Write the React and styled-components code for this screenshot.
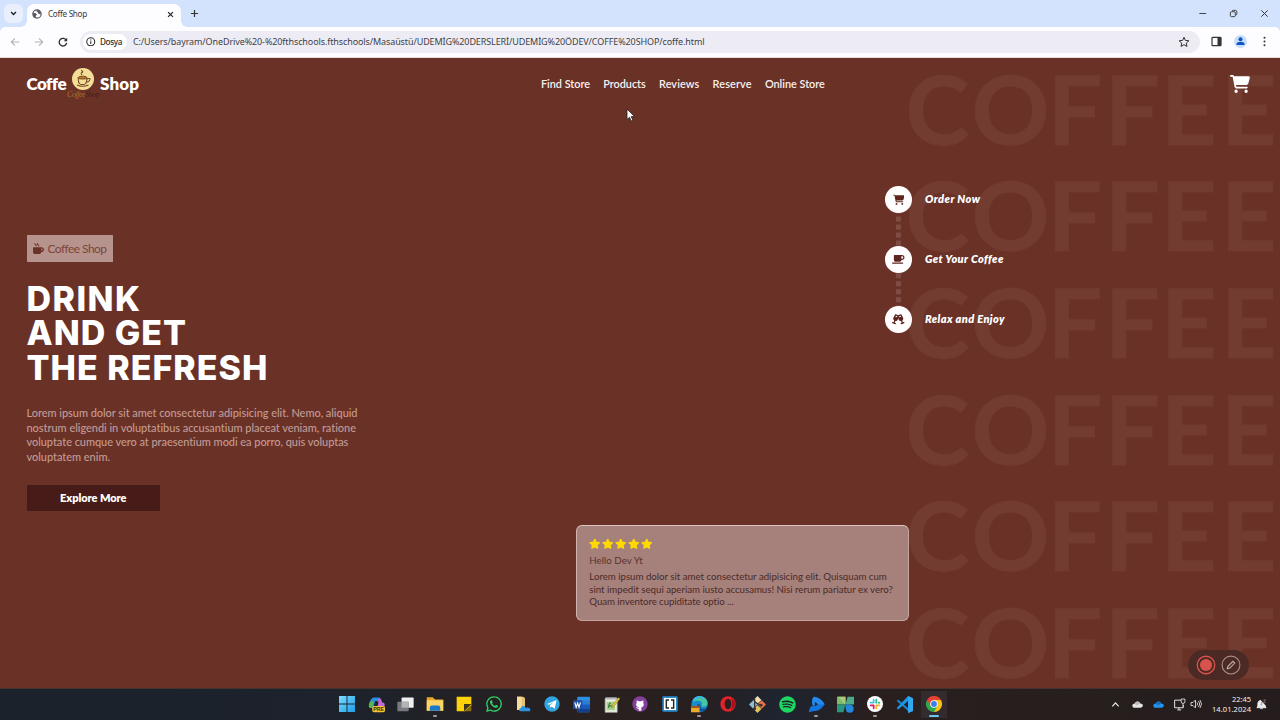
import React, { useLayoutEffect, useRef, useState } from 'react';
import styled, { createGlobalStyle, css } from 'styled-components';
import {
  FaCartShopping, FaMugSaucer, FaMugHot, FaChampagneGlasses, FaStar, FaWhatsapp, FaSpotify,
} from 'react-icons/fa6';

const Global = createGlobalStyle`
  * { box-sizing: border-box; }
  html, body { margin: 0; padding: 0; overflow: hidden; }
  body { font-family: Lato, "Liberation Sans", sans-serif; }
  svg { display: block; flex: none; }
`;

const ui = '"Noto Sans", "Open Sans", sans-serif';

/* ---------- text that is tracked to an exact line width ---------- */
const Line = styled.span`
  display: block;
  width: max-content;
  white-space: pre;
`;

function Fit({ w, children }) {
  const ref = useRef(null);
  const [tracking, setTracking] = useState(0);
  useLayoutEffect(() => {
    const natural = ref.current.getBoundingClientRect().width;
    setTracking((w - natural) / children.length);
  }, [w, children]);
  return <Line ref={ref} style={{ letterSpacing: `${tracking}px` }}>{children}</Line>;
}

/* ---------- browser chrome ---------- */
const Screen = styled.div`
  width: 1280px;
  height: 720px;
  display: flex;
  flex-direction: column;
  overflow: hidden;
  background: #6a3127;
`;
const TabStrip = styled.div`
  flex: none;
  height: 27px;
  display: flex;
  align-items: flex-start;
  padding: 4px 0 0 4px;
  background: #d3e3fd;
`;
const TabSearch = styled.div`
  width: 19px;
  height: 19px;
  border-radius: 6px;
  background: #e9effb;
  display: grid;
  place-items: center;
`;
const Tab = styled.div`
  position: relative;
  width: 154px;
  height: 23px;
  margin-left: 4px;
  padding: 0 6px 3px 5px;
  border-radius: 7px 7px 0 0;
  background: #fdfcff;
  display: flex;
  align-items: center;
  font: 8.2px/12px ${ui};
  color: #3a3a3e;
  &::before, &::after {
    content: '';
    position: absolute;
    bottom: 0;
    width: 6px;
    height: 6px;
  }
  &::before { left: -6px; background: radial-gradient(circle at 0 0, transparent 5.5px, #fdfcff 6px); }
  &::after { right: -6px; background: radial-gradient(circle at 100% 0, transparent 5.5px, #fdfcff 6px); }
`;
const TabTitle = styled.div`
  flex: 1;
  margin-left: 6px;
`;
const NewTab = styled.div`
  margin: 5px 0 0 9px;
`;
const WindowControls = styled.div`
  margin-left: auto;
  display: flex;
  align-items: center;
  height: 19px;
  gap: 22px;
  padding-right: 11px;
`;
const Toolbar = styled.div`
  flex: none;
  height: 31px;
  display: flex;
  align-items: center;
  padding: 0 10px 1px 10px;
  background: linear-gradient(#fdfcff, #fdfcff) 0 6px no-repeat,
    radial-gradient(circle at 6px 6px, #fdfcff 6px, transparent 6.5px) 0 0 / 6px 6px no-repeat,
    radial-gradient(circle at 0 6px, #fdfcff 6px, transparent 6.5px) 100% 0 / 6px 6px no-repeat,
    linear-gradient(#fdfcff, #fdfcff) 6px 0 / 1268px 6px no-repeat, #d3e3fd;
  border-bottom: 1px solid #e3dcdf;
`;
const NavIcons = styled.div`
  display: flex;
  gap: 14px;
  width: 70px;
`;
const Address = styled.div`
  width: 1120px;
  height: 22px;
  border-radius: 11px;
  background: #edecf5;
  display: flex;
  align-items: center;
  padding: 0 10px 0 3px;
  font: 9px/12px ${ui};
  color: #3f3f46;
`;
const FileChip = styled.div`
  width: 44px;
  height: 16px;
  border-radius: 8px;
  background: #fff;
  display: flex;
  align-items: center;
  gap: 4px;
  padding-left: 3.5px;
  margin-right: 6px;
  font-size: 8.2px;
  font-weight: 500;
  color: #2a2a2e;
`;
const AddressText = styled.div`flex: 1;`;
const ToolIcons = styled.div`
  display: flex;
  align-items: center;
  gap: 12px;
  margin-left: 11.5px;
`;

/* ---------- page ---------- */
const Page = styled.main`
  position: relative;
  flex: none;
  height: 630px;
  overflow: hidden;
  background: #6a3127;
  color: #fff;
`;
const Watermark = styled.div`
  position: absolute;
  top: -3.5px;
  left: 905.5px;
  font-size: 96.5px;
  font-weight: 700;
  line-height: 106.67px;
  color: #733c31;
  -webkit-text-stroke: 1px #733c31;
`;
const WatermarkRow = styled.div`
  display: flex;
`;
const Content = styled.div`
  position: relative;
  height: 100%;
`;
const Header = styled.header`
  height: 53px;
  display: flex;
  align-items: center;
  padding: 0 30px 1px 26.5px;
`;
const Brand = styled.div`
  display: flex;
  align-items: center;
  width: 514.5px;
  font-size: 17px;
  font-weight: 800;
  line-height: 22px;
`;
const BrandMark = styled.div`
  width: 34px;
  height: 34px;
  display: flex;
  flex-direction: column;
  align-items: center;
  padding-top: 1px;
`;
const BrandScript = styled.div`
  display: flex;
  margin-top: 0;
  font: italic 400 8px/10px "Liberation Serif", serif;
  color: #a9732b;
  em { color: #47201d; }
`;
const Nav = styled.nav`
  flex: 1;
  display: flex;
  gap: 13.3px;
  font-size: 10.9px;
  font-weight: 600;
  line-height: 14px;
  color: #f7f0ee;
`;
const Body = styled.div`
  display: flex;
  padding-left: 26.5px;
`;
const Hero = styled.section`
  width: 549.5px;
  padding-top: 124px;
`;
const Badge = styled.div`
  width: 86.5px;
  height: 27px;
  display: flex;
  align-items: center;
  gap: 3.5px;
  padding-left: 6.5px;
  background: #b6938d;
  color: #7a463d;
  font-size: 12px;
  line-height: 16px;
  svg { color: #6a3127; }
`;
const Title = styled.h1`
  margin: 19.5px 0 0;
  font-family: Inter, Lato, sans-serif;
  font-size: 34px;
  font-weight: 800;
  line-height: 34.67px;
`;
const Lead = styled.div`
  margin-top: 20.5px;
  font-size: 11px;
  font-weight: 500;
  line-height: 14.67px;
  color: #c19b94;
`;
const Button = styled.div`
  width: 133.5px;
  height: 26.5px;
  margin-top: 20px;
  display: grid;
  place-items: center;
  background: #471b17;
  font-size: 11px;
  font-weight: 800;
  line-height: 14px;
`;
const Side = styled.section`
  padding-top: 75px;
`;
const Steps = styled.div`
  margin-left: 309px;
`;
const Step = styled.div`
  display: flex;
  align-items: center;
  gap: 13.3px;
  height: 26.67px;
  font-size: 11px;
  font-weight: 800;
  font-style: italic;
  line-height: 14px;
`;
const StepDot = styled.div`
  width: 26.67px;
  height: 26.67px;
  border-radius: 50%;
  background: #fffdfd;
  color: #5c241c;
  display: grid;
  place-items: center;
`;
const Connector = styled.div`
  width: 5.4px;
  height: 33.33px;
  margin-left: 10.6px;
  background: repeating-linear-gradient(#7d4c43 0 5.33px, transparent 5.33px 8px);
  background-position: 0 ${(p) => p.$shift}px;
  background-size: 100% 8px;
`;
const Review = styled.article`
  width: 333.4px;
  height: 96.5px;
  margin-top: 192px;
  padding: 12.5px 0 0 12.3px;
  border: 1px solid #c4a5a0;
  border-top: 1.5px solid #dcc6c3;
  border-left-color: #d0b3af;
  border-radius: 6px;
  background: #a6817b;
  color: #4b2a27;
`;
const Stars = styled.div`
  display: flex;
  gap: 1.4px;
  color: #ffd900;
`;
const Reviewer = styled.div`
  margin-top: 3.5px;
  font-size: 9.8px;
  line-height: 14px;
  color: #573430;
`;
const Quote = styled.div`
  margin-top: 2.6px;
  font-size: 9.7px;
  line-height: 12.8px;
`;
const Recorder = styled.div`
  position: absolute;
  left: 1188px;
  top: 592px;
  width: 61px;
  height: 30px;
  border-radius: 15px;
  background: #4b2a26;
  display: flex;
  align-items: center;
  justify-content: center;
  gap: 5px;
`;
const Cursor = styled.div`
  position: absolute;
  left: 625.5px;
  top: 50px;
`;

/* ---------- taskbar ---------- */
const Taskbar = styled.footer`
  flex: none;
  height: 32px;
  display: flex;
  align-items: stretch;
  padding: 0 0 1px 332.5px;
  border-top: 1px solid #46322f;
  background: linear-gradient(90deg, #1b222c 0, #1d222b 28%, #29201f 46%, #281f1f 54%, #1e2430 61%, #291f1f 68%, #251d1d 100%);
`;
const AppSlot = styled.div`
  position: relative;
  width: 29.33px;
  display: grid;
  place-items: center;
  ${(p) => p.$active && css`
    background: linear-gradient(#332c2e, #332c2e) center / 26px 27px no-repeat;
  `}
  &::after {
    content: '';
    display: ${(p) => (p.$running || p.$active ? 'block' : 'none')};
    position: absolute;
    bottom: 2.5px;
    left: 50%;
    width: ${(p) => (p.$active ? 10 : 4)}px;
    height: 2px;
    margin-left: ${(p) => (p.$active ? -5 : -2)}px;
    border-radius: 1px;
    background: ${(p) => (p.$active ? '#67c6f2' : '#a09a9a')};
  }
`;
const Tray = styled.div`
  margin-left: auto;
  display: flex;
  align-items: center;
  padding-right: 13px;
`;
const TrayIcon = styled.div`
  margin-right: ${(p) => p.$gap}px;
`;
const Clock = styled.div`
  width: 39px;
  display: flex;
  flex-direction: column;
  align-items: flex-end;
  font: 7.5px/10px ${ui};
  color: #f4f0f0;
  margin-right: 5px;
`;

const S = ({ s = 17, w, h, v = 24, children, ...r }) => (
  <svg width={w || s} height={h || s} viewBox={`0 0 ${v} ${v}`} fill="none" {...r}>{children}</svg>
);

const apps = [
  { i: <S s={16}><defs><linearGradient id="win" x2="1" y2="1"><stop stopColor="#7bdcff" /><stop offset="1" stopColor="#1f9ee8" /></linearGradient></defs><path fill="url(#win)" d="M0 0h11.3v11.3H0zM12.7 0H24v11.3H12.7zM0 12.7h11.3V24H0zM12.7 12.7H24V24H12.7z" /></S> },
  { i: (
    <S s={17}>
      <path d="M8 2h8l3 6-4 1-4-2-3 9H3C0 13 3 3 8 2Z" fill="#2a8fe0" />
      <path d="M3 8l5-1-2 10H3c-3-1-2-6 0-9Z" fill="#54b84d" />
      <path d="M16 3c3 0 3 4 4 6 4 0 4 3 3 7l-5 3H9c4-2 4-15 7-16Z" fill="#c46bd6" />
      <path d="M10 7l5 1-2 8H8Z" fill="#1e2430" />
      <rect x="6" y="14" width="18" height="9" rx="2.5" fill="#f5c536" />
      <text x="15" y="21.3" textAnchor="middle" fontSize="7.5" fontWeight="700" fontFamily="Liberation Sans" fill="#3b2b08">PRE</text>
    </S>) },
  { i: <S s={17}><rect x="6.5" y="2" width="17" height="14.5" rx="1" fill="#efeff0" /><rect x=".5" y="8" width="16" height="13.5" rx="1" fill="#777b80" /><path d="M6.5 8h10v8.5h-10z" fill="#b3b4b6" /></S> },
  { run: 1, i: <S s={18}><path d="M1 3h8l3 3h11v15H1z" fill="#e7a825" /><path d="M1 7h22v14H1z" fill="#fbd367" /><path d="M5 21v-4q0-3 3-3h8q3 0 3 3v4z" fill="#1c78c9" /></S> },
  { i: <S s={16}><path d="M1 1h22v13l-9 9H1z" fill="#fdd208" /><path d="M12 12h11L12 23z" fill="#3b3420" /><path d="M23 13v10H13z" fill="#8b6e0a" /></S> },
  { i: <FaWhatsapp size={18} color="#2fd366" /> },
  { i: <S s={16}><path d="M3 1h9l3 2v18H3z" fill="#e8c270" /><path d="M3 1h7v20H3z" fill="#f5dc9c" /><path d="M9 23c-4 0-3-5 0-5 1-4 6-4 7 0 3-2 8 0 7 4l-1 1z" fill="#2b93e2" /></S> },
  { i: <S s={16}><circle cx="12" cy="12" r="11.5" fill="#31a5df" /><path d="M4.5 12 19 6l-3 13-4.500-3.300-2.200 2-.5-3.800 6-5-7.500 4.300z" fill="#fff" /></S> },
  { i: <S s={17}><rect x="6" y="1" width="18" height="22" rx="1.500" fill="#2f8de0" /><path d="M6 6.500h18V12H6z" fill="#2b7cd3" /><path d="M6 12h18v5.500H6z" fill="#185abd" /><path d="M6 17.500h18V22q0 1-1 1H7q-1 0-1-1z" fill="#143f8a" /><rect x="0" y="6" width="13" height="12.500" rx="1" fill="#1b4fa3" /><path d="m2.500 9 2 7 2-6 2 6 2-7" stroke="#fff" strokeWidth="1.600" /></S> },
  { i: <S s={17}><path d="M3 3h17v20H3z" fill="#ecefe4" stroke="#aaa" /><path d="M4 2h15v3H4z" fill="#b8babb" /><path d="M5 8h12v12H5z" fill="#a9cf8c" /><path d="M8 17q0-7 3-7M7 14h8" stroke="#3f7d35" strokeWidth="1.800" /><path d="m12 17 1-4L22 2l2 2-9 11z" fill="#e5c740" stroke="#6a6329" strokeWidth=".6" /></S> },
  { i: <S s={16}><circle cx="12" cy="12" r="11.500" fill="#82409d" /><path d="M7 6.500 10 8h4l3-1.500v4c2 4-1 6-3 6.500v5h-4v-3c-3 1-3-1-4-2 2-.5 2 1 4 .7V17c-3-1-5-3-3-6.500z" fill="#fff" /></S> },
  { i: <S s={16}><rect x=".5" y=".5" width="23" height="23" rx="2" fill="#268fd2" /><rect x="3" y="3" width="18" height="18" fill="#fff" /><path d="M10.500 6h-4v12h4M13.500 6h4v12h-4" stroke="#25262a" strokeWidth="2.200" /></S> },
  { run: 1, i: (
    <S s={17}>
      <circle cx="12" cy="11.500" r="11.500" fill="#178bd2" />
      <path d="M3 5C9-3 23 0 23.500 10c0 5-6 6-9 4 2-3 1-7-3-7-4-1-7 0-8.500 2z" fill="#47c6a0" />
      <path d="M3 5c4-6 14-6 17 0-6-4-12-2-17 3z" fill="#38b7ea" />
      <path d="M14 14c-2 4 4 5 8 3-3 6-8 6-12 3-3-3-2-8 1-9z" fill="#134d93" />
      <path d="M0 14h12v9H0z" fill="#edab2d" /><path d="M0 14h12v3H0z" fill="#9b5a20" />
    </S>) },
  { i: <S s={16}><ellipse cx="12" cy="12" rx="11.500" ry="11.500" fill="#e3222b" /><ellipse cx="12" cy="12" rx="5" ry="8" fill="#2b2020" /><path d="M16 3c9 4 9 14 0 18 3-4 3-14 0-18Z" fill="#a80f1b" /></S> },
  { i: (
    <S s={17}>
      <path d="m12 0 5.500 5.500L12 11 6.500 5.500z" fill="#f2dfb5" /><path d="m18 6 6 6-6 6-6-6z" fill="#e8734a" />
      <path d="m6 6 6 6-6 6-6-6z" fill="#8bbfd5" /><path d="m12 13 5.500 5.500L12 24l-5.500-5.500z" fill="#dfc45b" />
      <path d="M8 4v14M8 8l8 5" stroke="#3b312c" strokeWidth="1.800" /><circle cx="8" cy="18" r="2" fill="#3b312c" /><circle cx="17" cy="13" r="2" fill="#3b312c" />
    </S>) },
  { i: <FaSpotify size={17} color="#1ed760" /> },
  { run: 1, i: <S s={17}><path d="M8 1q10 1 15.500 10.500Q17 22 9 21l-8 2 2-7q1-2 4-2Q4 7 8 1Z" fill="#1274dc" /><path d="M8 1q-4 6-1 12l16.500-1.500Q18 2 8 1Z" fill="#2689ed" /><path d="M9.500 8.500v6l5-3z" fill="#202834" /></S> },
  { i: <S s={17}><path d="M0 1h12v11H0z" fill="#80b96a" /><path d="M12 12 15 1h9v11z" fill="#51a98b" /><path d="M0 23V12h12L9 23z" fill="#2b967e" /><path d="M1 1 12 12V1z" fill="#a4cc7a" /><circle cx="18" cy="18" r="5.500" fill="#2487dd" /><path d="M12 12h6l-6 6z" fill="#2487dd" /></S> },
  { run: 1, i: (
    <S s={16}>
      <circle cx="12" cy="12" r="12" fill="#fff" />
      <g strokeWidth="2.600" strokeLinecap="round"><path d="M10 5.500v4.500M5.500 10H10" stroke="#36c5f0" /><path d="M14 5.500V10M18.500 10h-1" stroke="#2eb67d" /><path d="M14 14v4.500M14 14h4.500" stroke="#ecb22e" /><path d="M10 14v4.500M5.500 14H10" stroke="#e01e5a" /></g>
    </S>) },
  { i: <S s={17}><path d="m17 0 7 3v18l-7 3v-7L3 5 1 7l16 14z" fill="#1683cc" /><path d="M17 0v7L3 19l-2-2z" fill="#1b96e4" /><path d="m17 0 7 3v18l-7 3z" fill="#32a9ef" /></S> },
  { act: 1, i: (
    <S s={16}>
      <path d="M12 12V6h10.400A12 12 0 0 1 12 24z" fill="#fbc116" />
      <path d="M1.600 6A12 12 0 0 0 12 24l5-9-5-3z" fill="#2da94f" /><path d="M1.600 6A12 12 0 0 1 22.400 6H12v6l-5 3z" fill="#e74235" />
      <circle cx="12" cy="12" r="5.700" fill="#fff" /><circle cx="12" cy="12" r="4.400" fill="#397fee" />
    </S>) },
];

const steps = [
  { icon: <FaCartShopping size={11.5} />, text: 'Order Now', w: 55.5, shift: 3.6 },
  { icon: <FaMugSaucer size={12.5} />, text: 'Get Your Coffee', w: 78.5, shift: 0.2 },
  { icon: <FaChampagneGlasses size={12.5} />, text: 'Relax and Enjoy', w: 80 },
];

const letters = [['C', 66], ['O', 76], ['F', 57.5], ['F', 56], ['E', 60], ['E', 56]];
const LetterBox = styled.span`
  display: block;
  width: ${(p) => p.$w}px;
`;

const Cloud = ({ c, d }) => (
  <S w={11} h={11}><path d="M6 19c-7 0-7-9 0-9 2-6 10-6 12 0 8 0 7 9 0 9z" fill={c} /><path d="M6 10c2-6 10-6 12 0l-8 4z" fill={d} /></S>
);

export default function App() {
  return (
    <Screen>
      <Global />
      <TabStrip>
        <TabSearch><S s={7} v={10}><path d="m1.500 3 3.500 3.500L8.500 3" stroke="#222" strokeWidth="2" /></S></TabSearch>
        <Tab>
          <S s={10}><circle cx="12" cy="12" r="10" stroke="#55585e" strokeWidth="2.800" /><path d="M3 9l6 1 3 4-3 2v6C4 21 1 15 3 9ZM12 2l-1 4 3 2 1 3 6 2c1-5-2-10-9-11Z" fill="#55585e" /></S>
          <TabTitle><Fit w={39}>Coffe Shop</Fit></TabTitle>
          <S s={9} v={10}><path d="m2.300 2.300 5.400 5.400M7.700 2.300 2.300 7.700" stroke="#222" strokeWidth="1.300" /></S>
        </Tab>
        <NewTab><S s={9} v={10}><path d="M5 1v8M1 5h8" stroke="#333" strokeWidth="1.300" /></S></NewTab>
        <WindowControls>
          <S s={9} v={10}><path d="M1.500 5h7.500" stroke="#333" /></S>
          <S s={9} v={10}><rect x="1.500" y="3" width="5.500" height="5.500" rx="1.200" stroke="#333" /><path d="M3.500 2.500Q3.500 1.500 5 1.500h2q1.700 0 1.700 1.700v2q0 1.500-1.200 1.500" stroke="#333" /></S>
          <S s={9} v={10}><path d="m1.500 1.500 7 7M8.500 1.500l-7 7" stroke="#333" strokeWidth="1.100" /></S>
        </WindowControls>
      </TabStrip>
      <Toolbar>
        <NavIcons>
          <S s={10} v={10}><path d="M9.300 5H1.300M5 1.300 1.300 5 5 8.700" stroke="#b4b4b8" strokeWidth="1.200" /></S>
          <S s={10} v={10}><path d="M.700 5h8M5 1.300 8.700 5 5 8.700" stroke="#b4b4b8" strokeWidth="1.200" /></S>
          <S s={10} v={10}><path d="M8.300 3.300A3.800 3.800 0 1 0 8.700 6" stroke="#2b2b2f" strokeWidth="1.300" /><path d="M9.200.800v3.400H5.800z" fill="#2b2b2f" /></S>
        </NavIcons>
        <Address>
          <FileChip>
            <S s={9.5} v={10}><circle cx="5" cy="5" r="4.200" stroke="#2a2a2e" strokeWidth="1.100" /><path d="M5 4.400v3M5 2.500v1.100" stroke="#2a2a2e" strokeWidth="1.100" /></S>
            <Fit w={22}>Dosya</Fit>
          </FileChip>
          <AddressText>
            <Fit w={571.5}>C:/Users/bayram/OneDrive%20-%20fthschools.fthschools/Masaüstü/UDEMİG%20DERSLERİ/UDEMİG%20ÖDEV/COFFE%20SHOP/coffe.html</Fit>
          </AddressText>
          <S s={12}><path d="m12 2.500 2.800 6.300 6.900.700-5.200 4.600 1.500 6.800-6-3.500-6 3.500 1.500-6.800-5.200-4.600 6.900-.700z" stroke="#333" strokeWidth="2" /></S>
        </Address>
        <ToolIcons>
          <S s={11} v={11}><rect x="1" y="1.300" width="9" height="8.400" rx=".8" stroke="#333" strokeWidth="1.200" /><path d="M6.500 1.300H10v8.400H6.500z" fill="#333" /></S>
          <S s={13} v={13}><circle cx="6.500" cy="6.500" r="6.500" fill="#c9defb" /><circle cx="6.500" cy="4.300" r="2" fill="#0b57c4" /><path d="M2.500 10V9c0-3 8-3 8 0v1z" fill="#0b57c4" /></S>
          <S s={11} v={11}><g fill="#333"><circle cx="5.500" cy="1.700" r="1" /><circle cx="5.500" cy="5.500" r="1" /><circle cx="5.500" cy="9.300" r="1" /></g></S>
        </ToolIcons>
      </Toolbar>

      <Page>
        <Watermark>
          {[0, 1, 2, 3, 4, 5].map((r) => (
            <WatermarkRow key={r}>
              {letters.map(([ch, w], i) => <LetterBox key={i} $w={w}>{ch}</LetterBox>)}
            </WatermarkRow>
          ))}
        </Watermark>
        <Content>
          <Header>
            <Brand>
              <Fit w={39}>Coffe</Fit>
              <BrandMark>
                <S s={22}>
                  <circle cx="12" cy="12" r="12" fill="#f5de96" />
                  <ellipse cx="11.500" cy="10.500" rx="4.800" ry="1.600" fill="#b97b28" stroke="#6b3f23" />
                  <path d="M6.700 10.500c0 7 2 7.500 4.800 7.500s4.800-.500 4.800-7.500M16.300 12q4-1.500 3.200 1-1 2.500-4 2.500M5.500 18.500q6 3 12.500 0M11 7.500q-2-2 0-2.500t-1-2.500" stroke="#6b3f23" strokeWidth="1.100" />
                </S>
                <BrandScript><Fit w={18}>Coffee</Fit><em><Fit w={14}>Shop</Fit></em></BrandScript>
              </BrandMark>
              <Fit w={39}>Shop</Fit>
            </Brand>
            <Nav>
              <Fit w={49}>Find Store</Fit>
              <Fit w={42.4}>Products</Fit>
              <Fit w={40.3}>Reviews</Fit>
              <Fit w={39}>Reserve</Fit>
              <Fit w={60}>Online Store</Fit>
            </Nav>
            <FaCartShopping size={20} />
          </Header>
          <Body>
            <Hero>
              <Badge><FaMugHot size={11} /><Fit w={58.5}>Coffee Shop</Fit></Badge>
              <Title>
                <Fit w={115}>DRINK</Fit>
                <Fit w={160.5}>AND GET</Fit>
                <Fit w={242}>THE REFRESH</Fit>
              </Title>
              <Lead>
                <Fit w={331}>Lorem ipsum dolor sit amet consectetur adipisicing elit. Nemo, aliquid</Fit>
                <Fit w={330}>nostrum eligendi in voluptatibus accusantium placeat veniam, ratione</Fit>
                <Fit w={322}>voluptate cumque vero at praesentium modi ea porro, quis voluptas</Fit>
                <Fit w={83.500}>voluptatem enim.</Fit>
              </Lead>
              <Button><Fit w={66.500}>Explore More</Fit></Button>
            </Hero>
            <Side>
              <Steps>
                {steps.map((s) => (
                  <React.Fragment key={s.text}>
                    <Step><StepDot>{s.icon}</StepDot><Fit w={s.w}>{s.text}</Fit></Step>
                    {s.shift !== undefined && <Connector $shift={s.shift} />}
                  </React.Fragment>
                ))}
              </Steps>
              <Review>
                <Stars>{[0, 1, 2, 3, 4].map((i) => <FaStar key={i} size={11.5} />)}</Stars>
                <Reviewer><Fit w={53.500}>Hello Dev Yt</Fit></Reviewer>
                <Quote>
                  <Fit w={297.500}>Lorem ipsum dolor sit amet consectetur adipisicing elit. Quisquam cum</Fit>
                  <Fit w={303.500}>sint impedit sequi aperiam iusto accusamus! Nisi rerum pariatur ex vero?</Fit>
                  <Fit w={144.500}>Quam inventore cupiditate optio ...</Fit>
                </Quote>
              </Review>
            </Side>
          </Body>
        </Content>
        <Recorder>
          <S s={20}><circle cx="12" cy="12" r="10.500" stroke="#d9534d" strokeWidth="1.600" /><circle cx="12" cy="12" r="7.300" fill="#d9534d" /></S>
          <S s={20}><circle cx="12" cy="12" r="10.700" stroke="#a98f8c" strokeWidth="1.300" /><path d="m7.500 16.500.800-3 6-6 2.200 2.200-6 6z" stroke="#c3b0ae" strokeWidth="1.300" /></S>
        </Recorder>
        <Cursor>
          <S w={9} h={14} viewBox="0 0 9 14"><path d="M1 1v10.500l2.500-2.200 1.700 3.700 1.700-.800-1.700-3.600H8.500z" fill="#fff" stroke="#222" strokeWidth=".8" /></S>
        </Cursor>
      </Page>

      <Taskbar>
        {apps.map((a, i) => <AppSlot key={i} $running={a.run} $active={a.act}>{a.i}</AppSlot>)}
        <Tray>
          <TrayIcon $gap={12}><S s={9} v={10}><path d="M1.500 7 5 3.300 8.500 7" stroke="#eee" strokeWidth="1.300" /></S></TrayIcon>
          <TrayIcon $gap={10}><Cloud c="#e6e4e4" d="#bfbcbc" /></TrayIcon>
          <TrayIcon $gap={9}><Cloud c="#2497ec" d="#0f6fc4" /></TrayIcon>
          <TrayIcon $gap={4}><S s={13}><path d="M15 4H3v14h16v-5M8 22h7M11 18v4" stroke="#e8e5e5" strokeWidth="1.800" /><path d="M15 2h7v5q0 3-3.500 3T15 7zM18.500 10v6" stroke="#e8e5e5" strokeWidth="1.600" /></S></TrayIcon>
          <TrayIcon $gap={10}><S s={12}><path d="M2 9h4l5-5v16l-5-5H2zM14 9q2.500 3 0 6M17 6q5 6 0 12M20 4q6 8 0 16" stroke="#e8e5e5" strokeWidth="1.700" /></S></TrayIcon>
          <Clock><Fit w={19}>22:45</Fit><Fit w={39}>14.01.2024</Fit></Clock>
          <S s={11}><path d="M11 3c-5 0-7 3-7 8v4l-2 4h20l-2-4v-2M9 21h6" fill="#eee" stroke="#eee" strokeWidth="1.800" /><path d="M10 8h4l-4 5h4M16 2h5l-5 6h5" stroke="#8f8888" strokeWidth="1.600" /></S>
        </Tray>
      </Taskbar>
    </Screen>
  );
}
